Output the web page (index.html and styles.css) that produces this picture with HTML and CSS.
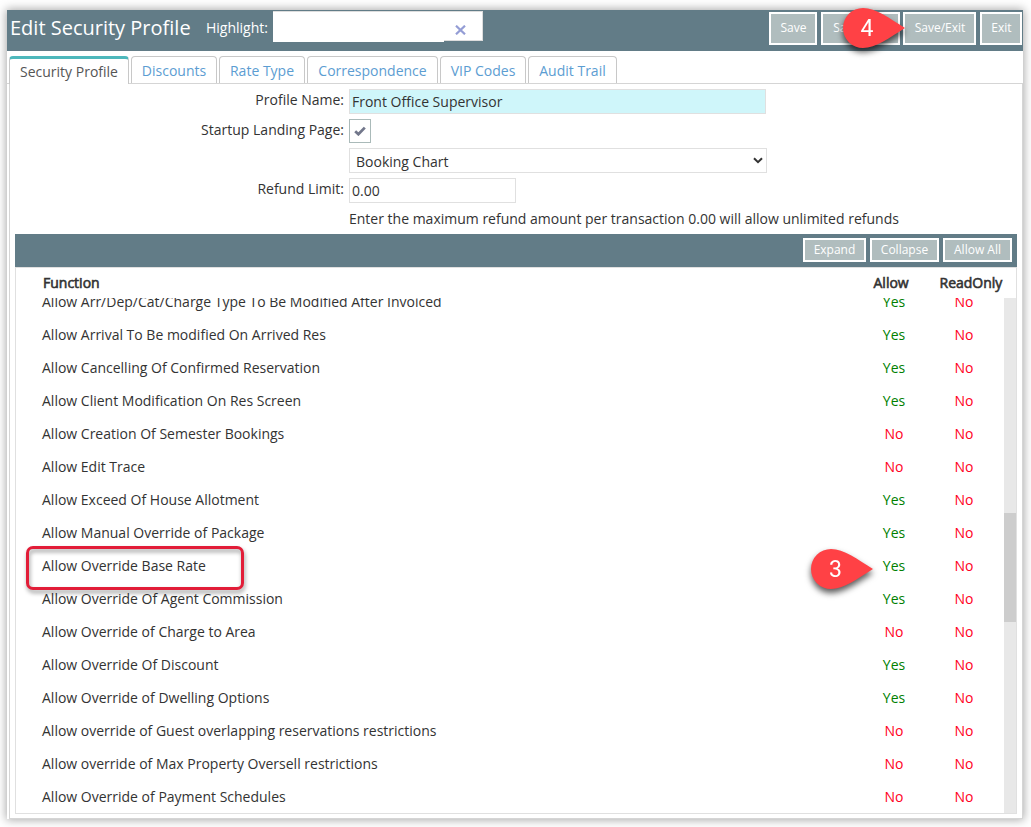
FILE: index.html
```html
<!DOCTYPE html>
<html lang="en">
<head>
<meta charset="utf-8">
<title>Edit Security Profile</title>
<link rel="stylesheet" href="styles.css">
</head>
<body>
<div class="window">
  <header class="titlebar">
    <h1 class="title">Edit Security Profile</h1>
    <span class="highlight-label">Highlight:</span>
    <div class="search"><div class="search-field"></div><div class="search-clear"><svg width="11" height="10" viewBox="0 0 11 10"><path d="M1 .7 10 9.3M10 .7 1 9.3"/></svg></div></div>
    <div class="actions">
      <button class="btn save">Save</button>
      <button class="btn save-new">Save/New</button>
      <button class="btn save-exit">Save/Exit</button>
      <button class="btn exit">Exit</button>
    </div>
  </header>
  <nav class="tabs">
    <a class="tab active">Security Profile</a>
    <a class="tab discounts">Discounts</a>
    <a class="tab rate">Rate Type</a>
    <a class="tab correspondence">Correspondence</a>
    <a class="tab vip">VIP Codes</a>
    <a class="tab audit">Audit Trail</a>
  </nav>
  <main class="content">
    <div class="form">
      <label class="label">Profile Name:</label>
      <div class="field name">Front Office Supervisor</div>
      <label class="label">Startup Landing Page:</label>
      <div class="check"><svg width="12" height="10" viewBox="0 0 12 10"><path d="M1.2 5.2 4.4 8.2 10.8 1.6"/></svg></div>
      <span></span>
      <div class="field select"><span>Booking Chart</span><svg width="10" height="7" viewBox="0 0 10 7"><path d="M1 1.2 5 5.2 9 1.2"/></svg></div>
      <label class="label">Refund Limit:</label>
      <div class="field limit">0.00</div>
      <span></span>
      <div class="hint">Enter the maximum refund amount per transaction 0.00 will allow unlimited refunds</div>
    </div>
    <section class="panel">
      <div class="panel-bar">
        <button class="small-btn expand">Expand</button>
        <button class="small-btn collapse">Collapse</button>
        <button class="small-btn allow-all">Allow All</button>
      </div>
      <div class="grid">
        <div class="grid-head"><span class="h-function">Function</span><span class="h-allow">Allow</span><span class="h-read">ReadOnly</span></div>
        <div class="scroll">
          <div class="rows">
            <div class="row"><span>Allow Arr/Dep/Cat/Charge Type To Be Modified After Invoiced</span><b class="yes">Yes</b><b class="no">No</b></div>
            <div class="row"><span>Allow Arrival To Be modified On Arrived Res</span><b class="yes">Yes</b><b class="no">No</b></div>
            <div class="row"><span>Allow Cancelling Of Confirmed Reservation</span><b class="yes">Yes</b><b class="no">No</b></div>
            <div class="row"><span>Allow Client Modification On Res Screen</span><b class="yes">Yes</b><b class="no">No</b></div>
            <div class="row"><span>Allow Creation Of Semester Bookings</span><b class="no">No</b><b class="no">No</b></div>
            <div class="row"><span>Allow Edit Trace</span><b class="no">No</b><b class="no">No</b></div>
            <div class="row"><span>Allow Exceed Of House Allotment</span><b class="yes">Yes</b><b class="no">No</b></div>
            <div class="row"><span>Allow Manual Override of Package</span><b class="yes">Yes</b><b class="no">No</b></div>
            <div class="row"><span>Allow Override Base Rate</span><b class="yes">Yes</b><b class="no">No</b></div>
            <div class="row"><span>Allow Override Of Agent Commission</span><b class="yes">Yes</b><b class="no">No</b></div>
            <div class="row"><span>Allow Override of Charge to Area</span><b class="no">No</b><b class="no">No</b></div>
            <div class="row"><span>Allow Override Of Discount</span><b class="yes">Yes</b><b class="no">No</b></div>
            <div class="row"><span>Allow Override of Dwelling Options</span><b class="yes">Yes</b><b class="no">No</b></div>
            <div class="row"><span>Allow override of Guest overlapping reservations restrictions</span><b class="no">No</b><b class="no">No</b></div>
            <div class="row"><span>Allow override of Max Property Oversell restrictions</span><b class="no">No</b><b class="no">No</b></div>
            <div class="row"><span>Allow Override of Payment Schedules</span><b class="no">No</b><b class="no">No</b></div>
          </div>
          <div class="track"><div class="thumb"></div></div>
        </div>
      </div>
    </section>
  </main>
</div>
<div class="outline"></div>
<svg class="pin pin-exit" width="64" height="42" viewBox="0 0 64 42"><path d="M20 0C33 0 46 10 62 20C46 30 33 40 20 40A20 20 0 0 1 20 0Z"/><text x="24" y="28">4</text></svg>
<svg class="pin pin-allow" width="64" height="42" viewBox="0 0 64 42"><path d="M20 0C33 0 46 10 62 20C46 30 33 40 20 40A20 20 0 0 1 20 0Z"/><text x="24.5" y="28">3</text></svg>
</body>
</html>
```
FILE: styles.css
```css
* { box-sizing: border-box; }
body {
  margin: 0;
  padding: 10px 8px 8px 7px;
  width: 1031px;
  height: 827px;
  overflow: hidden;
  background: #fff;
  color: #333;
  font: 14px/20px "Open Sans", sans-serif;
}
.window {
  display: flex;
  flex-direction: column;
  width: 1016px;
  height: 809px;
  background: #fff;
  box-shadow: 0 0 9px 1px rgba(0, 0, 0, .34);
}
.titlebar {
  display: flex;
  align-items: flex-start;
  height: 41px;
  flex: none;
  padding-left: 3px;
  background: #627c87;
  color: #fff;
}
.title { margin: 0; width: 196px; font-size: 20px; line-height: 36px; font-weight: 400; white-space: nowrap; }
.highlight-label { width: 67px; line-height: 36px; }
.search { display: flex; margin-top: 1px; }
.search-field { width: 171px; height: 31px; background: #fff; border-top: 1px solid #ddd; }
.search-clear { width: 39px; height: 30px; padding: 13px 0 0 11px; background: #fff; border: 1px solid #ddd; border-left: 0; }
.search-clear svg { display: block; fill: none; stroke: #949dd5; stroke-width: 2.2; }
.actions { display: flex; margin: 2px 1px 0 auto; }
.btn, .small-btn {
  padding: 0 0 2px 1px;
  border: 2px solid #fff;
  background: #b0bdbe;
  color: #fff;
  font: 12px/16px "Open Sans", sans-serif;
}
.btn { height: 33px; }
.save { width: 48px; margin-right: 4px; }
.save-new { width: 79px; margin-right: 3px; }
.save-exit { width: 73px; margin-right: 4px; }
.exit { width: 42px; }
.tabs {
  display: flex;
  gap: 2px;
  flex: none;
  height: 33px;
  padding: 5px 0 0 2px;
  border-bottom: 1px solid #d5d5d5;
}
.tab {
  height: 27px;
  padding-top: 4px;
  border: 1px solid #c8c8c8;
  border-bottom: 0;
  border-radius: 4px 4px 0 0;
  color: #5c9dd2;
  text-align: center;
  white-space: nowrap;
}
.active { width: 120px; height: 28px; padding-top: 3px; border-top: 3px solid #4db8bc; background: #fff; color: #555; }
.discounts, .rate, .vip { width: 86px; }
.correspondence { width: 131px; }
.audit { width: 89px; }
.content {
  display: flex;
  flex-direction: column;
  flex: 1;
  min-height: 0;
  margin-left: 2px;
  padding: 5px 5px 4px;
  border: 1px solid #d5d5d5;
  border-top: 0;
}
.form {
  display: grid;
  grid-template-columns: 329px 1fr;
  grid-template-rows: 30px 29px 30px 31px 25px;
  column-gap: 5px;
  height: 145px;
  flex: none;
}
.label { padding-top: 1px; text-align: right; }
.field { height: 25px; border: 1px solid #e0e0e0; padding: 2px 2px 0; }
.name { width: 417px; background: #cff6fa; }
.check { display: flex; align-items: center; justify-content: center; width: 22px; height: 24px; border: 1px solid #aabab9; }
.check svg { fill: none; stroke: #72778b; stroke-width: 2.8; }
.select { display: flex; justify-content: space-between; width: 418px; padding: 3px 3px 0 6px; }
.select svg { margin-top: 5px; fill: none; stroke: #333; stroke-width: 2; }
.limit { width: 167px; }
.hint { white-space: nowrap; }
.panel { display: flex; flex-direction: column; flex: 1; min-height: 0; width: 1002px; }
.panel-bar { display: flex; justify-content: flex-end; gap: 4px; height: 33px; flex: none; padding: 4px 5px 0 0; background: #627c87; }
.small-btn { height: 24px; padding: 0; }
.expand { width: 63px; }
.collapse { width: 69px; }
.allow-all { width: 69px; }
.grid { display: flex; flex-direction: column; flex: 1; min-height: 0; border: 1px solid #e0e0e0; }
.grid-head { display: flex; height: 30px; flex: none; padding: 5px 0 0 27px; -webkit-text-stroke: .6px #333; }
.h-function { width: 830.5px; }
.h-allow { width: 66px; }
.scroll { display: flex; flex: 1; min-height: 0; overflow: hidden; }
.rows { width: 988px; margin-top: -13px; }
.row { display: grid; grid-template-columns: 817px 70px 70px; height: 33px; padding: 7px 0 0 26px; white-space: nowrap; }
.row b { font-weight: 400; text-align: center; }
.yes { color: #008000; }
.no { color: #ff0022; }
.track { width: 12px; background: #e8e8e8; padding-top: 215px; }
.thumb { height: 109px; background: #cdcdcd; }
.outline {
  position: absolute;
  left: 26px;
  top: 546px;
  width: 218px;
  height: 44px;
  border: 3px solid #e21d38;
  border-radius: 7px;
  filter: drop-shadow(1px 3px 2px rgba(0, 0, 0, .4));
}
.pin { position: absolute; overflow: visible; filter: drop-shadow(0 4px 3px rgba(0, 0, 0, .65)); }
.pin path { fill: #ff4145; }
.pin text { fill: #fff; font: 23px Roboto, sans-serif; text-anchor: middle; }
.pin-exit { left: 843px; top: 8px; }
.pin-allow { left: 811px; top: 549px; }
```
